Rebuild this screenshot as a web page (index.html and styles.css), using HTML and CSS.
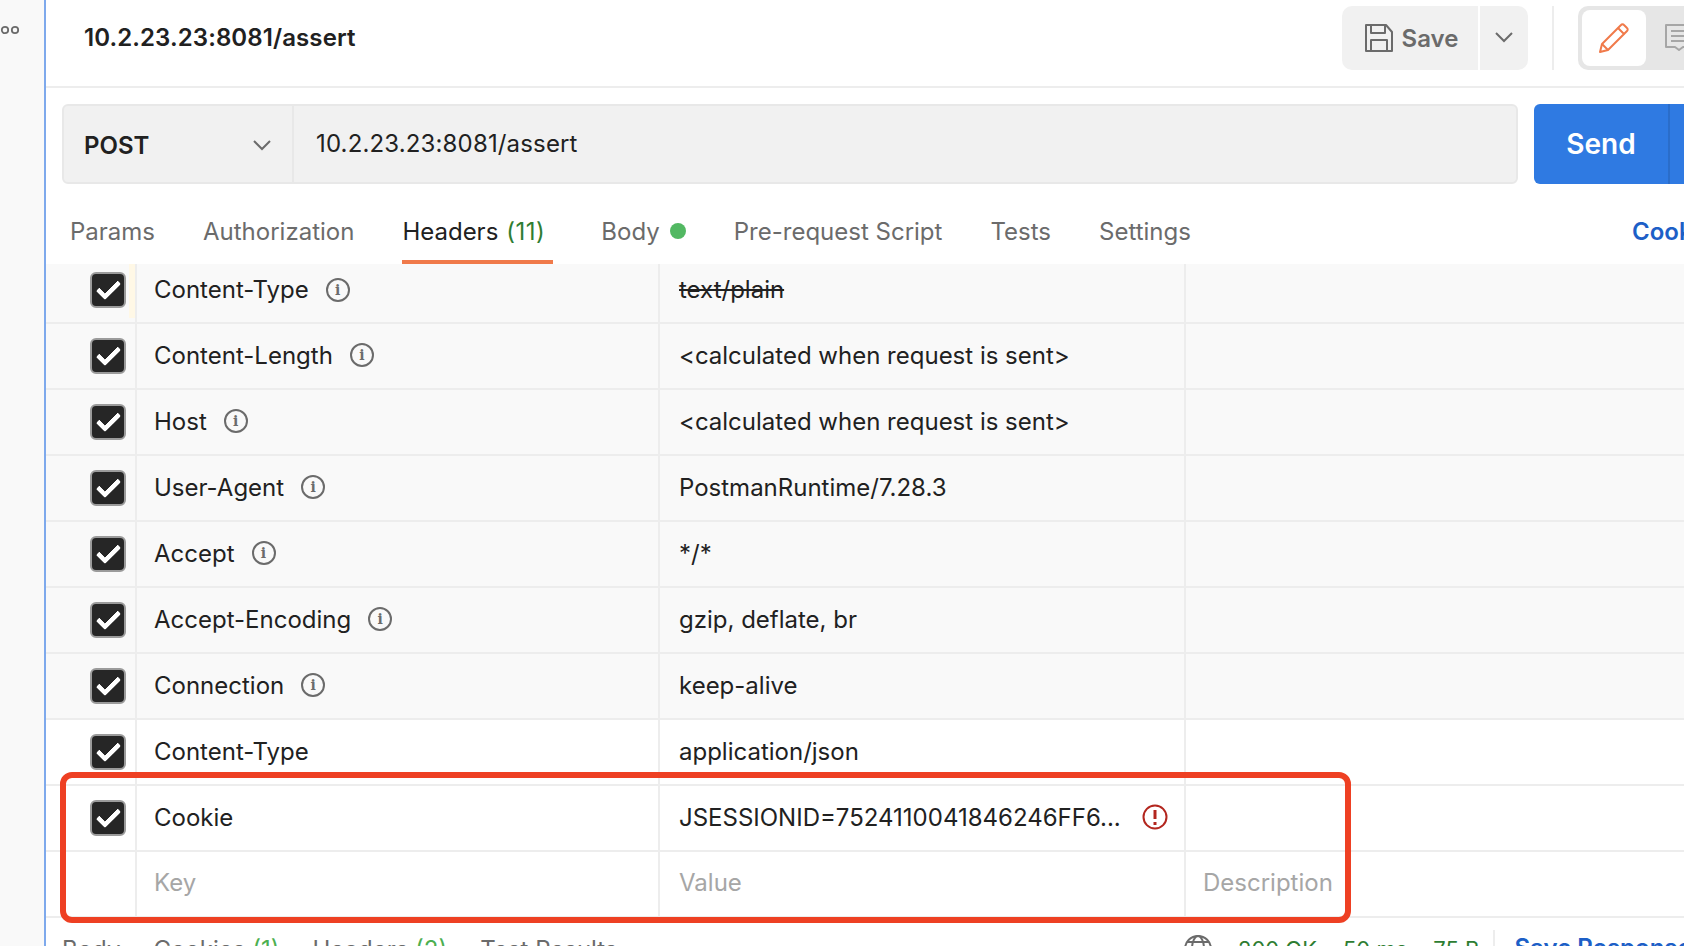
FILE: index.html
```html
<!DOCTYPE html>
<html lang="en">
<head>
    <meta charset="UTF-8">
    <title>10.2.23.23:8081/assert</title>
    <link rel="stylesheet" href="styles.css">
</head>
<body>
<div class="app">
    <aside class="sidebar">
        <svg class="dots" width="24" height="12" viewBox="0 0 24 12"><circle cx="5" cy="6" r="3.2"/><circle cx="15" cy="6" r="3.2"/></svg>
    </aside>
    <main class="main">
        <header class="topbar">
            <h1 class="title">10.2.23.23:8081/assert</h1>
            <div class="actions">
                <button class="save">
                    <svg width="30" height="30" viewBox="0 0 30 30" fill="none" stroke="#6b6b6b" stroke-width="2" stroke-linejoin="round"><path d="M2 2h20l6 7v19H2z"/><path d="M7 2v8h14V2"/><path d="M7 28V17h16v11"/></svg>
                    <span>Save</span>
                </button>
                <button class="save-more">
                    <svg width="18" height="12" viewBox="0 0 18 12" fill="none" stroke="#6b6b6b" stroke-width="2"><path d="M1 2l8 8 8-8"/></svg>
                </button>
                <div class="sep"></div>
                <div class="toggle">
                    <div class="toggle-on">
                        <svg width="32" height="32" viewBox="0 0 32 32" fill="none" stroke="#f07a4a" stroke-width="2" stroke-linejoin="round"><path d="M2 30l2-8L20 6l6 6-16 16z"/><path d="M20 6l3-3a2 2 0 013 0l3 3a2 2 0 010 3l-3 3"/><path d="M4 22l6 6"/></svg>
                    </div>
                    <svg class="toggle-off" width="30" height="30" viewBox="0 0 30 30" fill="none" stroke="#a6a6a6" stroke-width="2" stroke-linejoin="round"><path d="M2 2h27v22H19l-4 3-4-3H2z"/><path d="M7 8h18M7 13h18M7 18h18"/></svg>
                </div>
            </div>
        </header>

        <div class="request">
            <div class="urlbar">
                <div class="method">
                    <span>POST</span>
                    <svg width="18" height="12" viewBox="0 0 18 12" fill="none" stroke="#6b6b6b" stroke-width="2"><path d="M1 2l8 8 8-8"/></svg>
                </div>
                <div class="url">10.2.23.23:8081/assert</div>
            </div>
            <button class="send"><span>Send</span></button>
        </div>

        <nav class="tabs">
            <a class="tab">Params</a>
            <a class="tab">Authorization</a>
            <a class="tab active">Headers <em>(11)</em></a>
            <a class="tab">Body <i class="dot"></i></a>
            <a class="tab">Pre-request Script</a>
            <a class="tab">Tests</a>
            <a class="tab">Settings</a>
            <a class="cookies">Cookies</a>
        </nav>

        <div class="table">
            <div class="row auto first">
                <div class="c-check flagged"><span class="check"></span></div>
                <div class="c-key">Content-Type<i class="info">i</i></div>
                <div class="c-val struck">text/plain</div>
                <div class="c-desc"></div>
            </div>
            <div class="row auto">
                <div class="c-check"><span class="check"></span></div>
                <div class="c-key">Content-Length<i class="info">i</i></div>
                <div class="c-val">&lt;calculated when request is sent&gt;</div>
                <div class="c-desc"></div>
            </div>
            <div class="row auto">
                <div class="c-check"><span class="check"></span></div>
                <div class="c-key">Host<i class="info">i</i></div>
                <div class="c-val">&lt;calculated when request is sent&gt;</div>
                <div class="c-desc"></div>
            </div>
            <div class="row auto">
                <div class="c-check"><span class="check"></span></div>
                <div class="c-key">User-Agent<i class="info">i</i></div>
                <div class="c-val">PostmanRuntime/7.28.3</div>
                <div class="c-desc"></div>
            </div>
            <div class="row auto">
                <div class="c-check"><span class="check"></span></div>
                <div class="c-key">Accept<i class="info">i</i></div>
                <div class="c-val">*/*</div>
                <div class="c-desc"></div>
            </div>
            <div class="row auto">
                <div class="c-check"><span class="check"></span></div>
                <div class="c-key">Accept-Encoding<i class="info">i</i></div>
                <div class="c-val">gzip, deflate, br</div>
                <div class="c-desc"></div>
            </div>
            <div class="row auto">
                <div class="c-check"><span class="check"></span></div>
                <div class="c-key">Connection<i class="info">i</i></div>
                <div class="c-val">keep-alive</div>
                <div class="c-desc"></div>
            </div>
            <div class="row">
                <div class="c-check"><span class="check"></span></div>
                <div class="c-key">Content-Type</div>
                <div class="c-val">application/json</div>
                <div class="c-desc"></div>
            </div>
            <div class="row">
                <div class="c-check"><span class="check"></span></div>
                <div class="c-key">Cookie</div>
                <div class="c-val cookie-val">
                    <span>JSESSIONID=7524110041846246FF6...</span>
                    <svg width="26" height="26" viewBox="0 0 26 26" fill="none" stroke="#b3261e" stroke-width="2"><circle cx="13" cy="13" r="11.5"/><path d="M13 6v9" stroke-width="3"/><path d="M13 18v3" stroke-width="3"/></svg>
                </div>
                <div class="c-desc"></div>
            </div>
            <div class="row empty">
                <div class="c-check"></div>
                <div class="c-key">Key</div>
                <div class="c-val">Value</div>
                <div class="c-desc">Description</div>
            </div>
        </div>

        <footer class="resp">
            <div class="resp-tabs">
                <a>Body</a>
                <a>Cookies <em>(1)</em></a>
                <a>Headers <em>(2)</em></a>
                <a>Test Results</a>
            </div>
            <div class="status">
                <svg width="28" height="28" viewBox="0 0 28 28" fill="none" stroke="#6b6b6b" stroke-width="2"><circle cx="14" cy="14" r="13"/><ellipse cx="14" cy="14" rx="6" ry="13"/><path d="M1 14h26M3 7h22M3 21h22"/></svg>
                <span class="ok">200 OK</span>
                <span class="ok">50 ms</span>
                <span class="ok">75 B</span>
                <i class="bar"></i>
                <a class="save-resp">Save Response</a>
            </div>
        </footer>
    </main>
    <div class="marker"></div>
</div>
</body>
</html>
```
FILE: styles.css
```css
html, body {
    margin: 0;
    padding: 0;
    height: 100%;
    overflow: hidden;
}
body {
    font-family: Inter, "Noto Sans", sans-serif;
    font-size: 24px;
    color: #212121;
    background: #fff;
}
button {
    font-family: inherit;
    border: 0;
    padding: 0;
    cursor: pointer;
}
.app {
    display: flex;
    position: relative;
    height: 946px;
    overflow: hidden;
}
.sidebar {
    flex: 0 0 44px;
    background: #f9f9f9;
    border-right: 2px solid #7ea9ec;
}
.dots {
    display: block;
    margin-top: 24px;
    fill: none;
    stroke: #6b6b6b;
    stroke-width: 1.8;
}
.main {
    flex: 1;
    min-width: 0;
}
.topbar {
    display: flex;
    align-items: center;
    justify-content: space-between;
    height: 86px;
    border-bottom: 2px solid #ededed;
    padding-left: 38px;
    overflow: hidden;
}
.title {
    margin: 0;
    font-size: 24px;
    font-weight: 600;
    letter-spacing: 0.1px;
    position: relative;
    top: -6px;
}
.actions {
    display: flex;
    align-items: stretch;
    height: 64px;
    margin-top: -10px;
    margin-right: -60px;
    flex: none;
}
.save {
    display: flex;
    align-items: center;
    justify-content: center;
    gap: 8px;
    width: 136px;
    padding-left: 2px;
    background: #f1f1f1;
    border-radius: 10px 0 0 10px;
    color: #6b6b6b;
    font-size: 24px;
    font-weight: 600;
}
.save-more {
    width: 48px;
    margin-left: 2px;
    background: #f1f1f1;
    border-radius: 0 10px 10px 0;
}
.sep {
    width: 2px;
    margin: 0 24px;
    background: #ededed;
}
.toggle {
    display: flex;
    align-items: center;
    gap: 18px;
    width: 166px;
    padding: 4px;
    box-sizing: border-box;
    background: #e6e6e6;
    border-radius: 10px;
}
.toggle-on {
    display: flex;
    align-items: center;
    justify-content: center;
    width: 64px;
    height: 56px;
    background: #fff;
    border-radius: 8px;
}
.toggle-off {
    flex: none;
}
.request {
    display: flex;
    gap: 16px;
    padding: 16px 0 0 16px;
}
.urlbar {
    display: flex;
    flex: none;
    width: 1456px;
    height: 80px;
    box-sizing: border-box;
    background: #f1f1f1;
    border: 2px solid #e8e8e8;
    border-radius: 6px;
}
.method {
    display: flex;
    align-items: center;
    justify-content: space-between;
    flex: none;
    width: 230px;
    padding: 2px 21px 0 20px;
    box-sizing: border-box;
    border-right: 2px solid #e8e8e8;
    font-weight: 600;
}
.url {
    display: flex;
    align-items: center;
    padding: 0 0 1px 22px;
    letter-spacing: 0.15px;
}
.send {
    flex: none;
    width: 200px;
    height: 80px;
    padding-right: 66px;
    background: #2f7ae2;
    border-radius: 6px 0 0 6px;
    color: #fff;
    font-size: 28px;
    font-weight: 600;
    position: relative;
}
.send::after {
    content: "";
    position: absolute;
    left: 134px;
    top: 0;
    bottom: 0;
    width: 2px;
    background: #2a6dca;
}
.tabs {
    display: flex;
    align-items: stretch;
    gap: 48px;
    height: 80px;
    padding-left: 24px;
    white-space: nowrap;
    color: #6b6b6b;
}
.tab {
    display: flex;
    align-items: center;
    gap: 6px;
    padding-top: 14px;
    box-sizing: border-box;
}
.tab.active {
    gap: 8px;
    color: #212121;
    box-shadow: inset 0 -4px 0 #f07a4a;
    padding-right: 8px;
}
.tab em {
    font-style: normal;
    color: #2e7d32;
    letter-spacing: 0.5px;
}
.dot {
    width: 16px;
    height: 16px;
    margin-left: 4px;
    border-radius: 50%;
    background: #52b862;
}
.cookies {
    margin-left: auto;
    flex: none;
    width: 52px;
    overflow: hidden;
    align-self: center;
    padding-top: 14px;
    color: #1d5fc7;
    font-weight: 600;
}
.table {
    height: 654px;
}
.row {
    display: grid;
    grid-template-columns: 91px 523px 526px 1fr;
    height: 64px;
    border-bottom: 2px solid #ededed;
}
.row.auto {
    background: #f9f9f9;
}
.row > div {
    display: flex;
    align-items: center;
    border-right: 2px solid #ededed;
    padding: 0 0 2px 17px;
    white-space: nowrap;
    overflow: hidden;
}
.row.first {
    height: 58px;
}
.row.first > div {
    padding-bottom: 7px;
}
.row > .c-val {
    padding-left: 19px;
}
.row > .c-desc {
    border-right: 0;
}
.row > .c-check {
    justify-content: flex-end;
    padding: 0 9px 0 0;
}
.row.first > .flagged {
    padding-bottom: 7px;
    background: linear-gradient(#fff8e6, #fff8e6) right top / 6px 54px no-repeat;
}
.check {
    position: relative;
    width: 32px;
    height: 32px;
    background: #262626;
    border: 2px solid #9b9b9b;
    border-radius: 6px;
}
.check::after {
    content: "";
    position: absolute;
    left: 10px;
    top: 2px;
    width: 13px;
    height: 23px;
    border: solid #fff;
    border-width: 0 5px 5px 0;
    border-radius: 2px;
    transform: rotate(45deg);
    box-sizing: border-box;
}
.info {
    display: inline-flex;
    align-items: center;
    justify-content: center;
    width: 20px;
    height: 20px;
    margin-left: 17px;
    border: 2px solid #6b6b6b;
    border-radius: 50%;
    color: #6b6b6b;
    font-family: "DejaVu Serif", serif;
    font-size: 14px;
    font-style: normal;
    font-weight: 700;
}
.struck {
    text-decoration: line-through;
}
.row > .cookie-val {
    justify-content: space-between;
    padding-right: 16px;
}
.row.empty {
    color: #a6a6a6;
}
.row.empty > div {
    padding-bottom: 4px;
}
.resp {
    display: grid;
    grid-template-columns: 1138px 1fr;
    color: #6b6b6b;
    white-space: nowrap;
}
.resp-tabs {
    display: flex;
    gap: 33px;
    padding: 17px 0 0 16px;
}
.resp-tabs em {
    font-style: normal;
    color: #4caf50;
}
.status {
    display: flex;
    align-items: flex-start;
    gap: 26px;
    padding-top: 18px;
    font-size: 22px;
}
.status svg {
    flex: none;
    margin-top: -1px;
}
.status .ok {
    color: #2e7d32;
}
.bar {
    flex: none;
    width: 2px;
    height: 30px;
    margin: -6px -6px 0 -13px;
    background: #ededed;
}
.save-resp {
    margin-top: -3px;
    color: #1d5fc7;
    font-size: 24px;
    font-weight: 600;
}
.marker {
    position: absolute;
    left: 60px;
    top: 772px;
    width: 1291px;
    height: 151px;
    box-sizing: border-box;
    border: 6px solid #ee4023;
    border-radius: 12px;
}
```
